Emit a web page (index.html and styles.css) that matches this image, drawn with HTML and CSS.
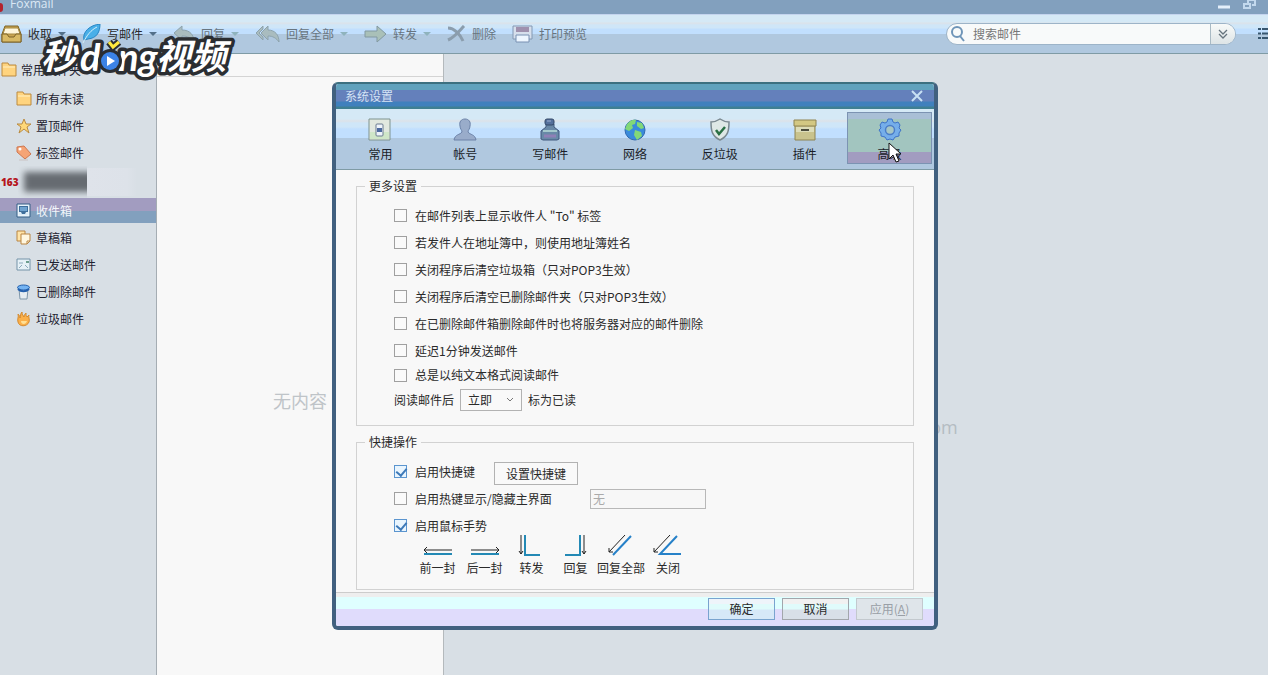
FILE: index.html
```html
<!DOCTYPE html>
<html lang="zh-CN">
<head>
    <meta charset="UTF-8">
    <meta name="viewport" content="width=device-width, initial-scale=1.0">
    <title>Foxmail</title>
    <link rel="stylesheet" href="styles.css">
</head>
<body>
    <div class="app">
        <header class="titlebar">
            <span class="app-dot"></span>
            <span class="app-name">Foxmail</span>
            <div class="window-buttons">
                <button aria-label="最小化"><svg width="14" height="14" viewBox="0 0 14 14"><path d="M1 7h12" stroke="#e4effa" stroke-width="3"/></svg></button>
                <button aria-label="还原"><svg width="14" height="14" viewBox="0 0 14 14" fill="none" stroke="#c3d9ee" stroke-width="2"><path d="M5 3V0h7v5H9M1 4h6v4H1z"/></svg></button>
            </div>
        </header>

        <nav class="toolbar">
            <button class="tool">
                <svg width="21" height="20" viewBox="0 0 21 20"><path d="M4 2h13l3 8v8H1v-8z" fill="#c9a552" stroke="#7d6226"/><path d="M4 4h13l2 6H2z" fill="#fff6da" stroke="#a5883f"/><path d="M1 10h5l2 3h5l2-3h5v8H1z" fill="#d8b964" stroke="#7d6226"/></svg>
                <span>收取</span><i class="arrow dark"></i>
            </button>
            <button class="tool">
                <svg width="19" height="20" viewBox="0 0 19 20"><path d="M2 16C0 8 8 1 18 0c0 8-3 14-12 15z" fill="#49afe8" stroke="#2786c4"/><path d="M1 19C5 11 9 6 15 3" fill="none" stroke="#d2effc"/></svg>
                <span>写邮件</span><i class="arrow dark"></i>
            </button>
            <button class="tool off">
                <svg width="22" height="18" viewBox="0 0 22 18"><path d="M9 1v4c8 0 12 5 12 12-3-4-6-6-12-6v4L1 8z" fill="#a9bcbf" stroke="#8da3ad"/></svg>
                <span>回复</span><i class="arrow"></i>
            </button>
            <button class="tool off">
                <svg width="25" height="18" viewBox="0 0 25 18"><path d="M8 1v3L4 8l4 4v3L1 8z" fill="#a9bcbf" stroke="#8da3ad"/><path d="M13 1v4c7 0 11 5 11 12-3-4-6-6-11-6v4L6 8z" fill="#a9bcbf" stroke="#8da3ad"/></svg>
                <span>回复全部</span><i class="arrow"></i>
            </button>
            <button class="tool off">
                <svg width="23" height="18" viewBox="0 0 23 18"><path d="M1 6h12V1l9 8-9 8v-5H1z" fill="#a9c0b8" stroke="#8299a2"/></svg>
                <span>转发</span><i class="arrow"></i>
            </button>
            <button class="tool off">
                <svg width="19" height="18" viewBox="0 0 19 18" fill="none" stroke="#8b9dad" stroke-width="3"><path d="M1 3c6 0 12 6 15 13"/><path d="M17 1C13 5 8 12 1 15"/></svg>
                <span>删除</span>
            </button>
            <button class="tool off">
                <svg width="21" height="18" viewBox="0 0 21 18"><path d="M1 1h19v13H1z" fill="#d6dfec" stroke="#8298b4"/><path d="M4 2h13v5H4z" fill="#9f91ae"/><path d="M4 10h13v7H4z" fill="#edf6ff" stroke="#7890b2"/></svg>
                <span>打印预览</span>
            </button>

            <div class="search">
                <svg width="16" height="16" viewBox="0 0 16 16" fill="none" stroke="#6f95b8" stroke-width="2"><circle cx="7" cy="6" r="5"/><path d="M10 10l4 5"/></svg>
                <input type="text" placeholder="搜索邮件" aria-label="搜索邮件">
                <button aria-label="更多搜索选项"><svg width="10" height="10" viewBox="0 0 10 10" fill="none" stroke="#66747e" stroke-width="1.3"><path d="M1 1l4 4 4-4M1 5l4 4 4-4"/></svg></button>
            </div>
            <button class="view-mode" aria-label="视图"><svg width="16" height="13" viewBox="0 0 16 13" fill="none" stroke="#37566f" stroke-width="2"><path d="M0 2h3M4 2h12M0 6.500h3M4 6.500h12M0 11h3M4 11h12"/></svg></button>
        </nav>

        <main class="main">
            <aside class="sidebar">
                <a class="folder root" href="#">
                    <svg width="16" height="15" viewBox="0 0 16 15"><path d="M1 1h6l1 2h7v11H1z" fill="#ffd47f" stroke="#bb8a41"/><path d="M2 5h12" stroke="#fff0c3"/></svg>
                    常用文件夹
                </a>
                <a class="folder" href="#">
                    <svg width="16" height="15" viewBox="0 0 16 15"><path d="M1 1h6l1 2h7v11H1z" fill="#ffd47f" stroke="#bb8a41"/><path d="M2 5h12" stroke="#fff0c3"/></svg>
                    所有未读
                </a>
                <a class="folder" href="#">
                    <svg width="16" height="16" viewBox="0 0 16 16"><path d="M8 1l2 5h5l-4 3 2 6-5-4-5 4 2-6-4-3h5z" fill="#ffd878" stroke="#b98b43"/></svg>
                    置顶邮件
                </a>
                <a class="folder" href="#">
                    <svg width="16" height="16" viewBox="0 0 16 16"><path d="M1 2l7-1 7 8-6 5-8-7z" fill="#f5a476" stroke="#ce7750"/><circle cx="4" cy="4" r="1.500" fill="#fff"/><path d="M3 15h9" stroke="#c9c3c4"/></svg>
                    标签邮件
                </a>
                <div class="account">
                    <b>163</b>
                    <span class="masked"></span>
                    <span class="masked-light"></span>
                </div>
                <a class="folder selected" href="#">
                    <svg width="16" height="16" viewBox="0 0 16 16"><path d="M1 1h13v13H1z" fill="#e8f3fb" stroke="#355f86"/><path d="M3 3h9v9H3z" fill="#3f6f9c"/><path d="M4 4h7v4H4z" fill="#6fa3cf"/><path d="M3 9h2l1 2h3l1-2h2v3H3z" fill="#dcebf6"/></svg>
                    收件箱
                </a>
                <a class="folder" href="#">
                    <svg width="16" height="16" viewBox="0 0 16 16"><path d="M1 1h8v10H1z" fill="#ffe4a8" stroke="#b98542"/><path d="M5 4h9v7l-3 3H5z" fill="#fff7e0" stroke="#b98542"/><path d="M14 11h-3v3" fill="none" stroke="#b98542"/></svg>
                    草稿箱
                </a>
                <a class="folder" href="#">
                    <svg width="16" height="14" viewBox="0 0 16 14"><path d="M1 1h13v11H1z" fill="#e6f1f7" stroke="#7593a8"/><path d="M10 3h3v2h-3z" fill="#6c9e8e"/><path d="M3 5h4M3 10l3-3M12 10L9 7" stroke="#8daabc"/></svg>
                    已发送邮件
                </a>
                <a class="folder" href="#">
                    <svg width="16" height="16" viewBox="0 0 16 16"><path d="M3 5h9l-1 10H4z" fill="#e6edf2" stroke="#7c95a9"/><ellipse cx="7.500" cy="3.500" rx="6" ry="2.500" fill="#73b3f2" stroke="#2460ad"/><path d="M2 5c3 3 8 3 11 0" fill="none" stroke="#2460ad" stroke-width="2"/></svg>
                    已删除邮件
                </a>
                <a class="folder" href="#">
                    <svg width="16" height="16" viewBox="0 0 16 16"><path d="M2 3c1 1 2 2 2 4 1-2 0-4 2-6 0 3 1 3 2 5 0-2 1-3 2-4 0 2 0 3 1 4l2-2c-1 2 1 4 0 7-2 5-10 5-11 0-1-3 1-5 0-8z" fill="#fbb04a" stroke="#d48a2e"/><path d="M5 10c0 4 5 4 6 0" fill="#ffe095"/></svg>
                    垃圾邮件
                </a>
            </aside>
            <section class="mail-list">
                <div class="list-head"></div>
                <p class="empty">无内容</p>
            </section>
            <section class="reader">
                <p class="site">www.foxmail.com</p>
            </section>
        </main>
    </div>

    <svg class="watermark" width="200" height="52" viewBox="0 0 200 52" role="img" aria-label="秒dǒng视频">
        <g class="brand">
            <text x="3" y="33" font-size="35">秒</text>
            <text class="latin" x="42" y="35" font-size="38">d</text>
            <text class="latin" x="80" y="35" font-size="38">ng</text>
            <text x="118" y="33" font-size="35">视频</text>
        </g>
        <circle cx="72" cy="25" r="12" fill="#2b2e32"/>
        <circle cx="72" cy="25" r="9" fill="#3c83e6"/>
        <path d="M69 20l8 5-8 5z" fill="#fff"/>
        <path d="M71 6l4 5 6-5" fill="none" stroke="#2b2e32" stroke-width="7"/>
        <path d="M71 6l4 5 6-5" fill="none" stroke="#ffe93e" stroke-width="3"/>
    </svg>

    <div class="overlay">
        <div class="dialog" role="dialog" aria-labelledby="dialogTitle">
            <div class="dialog-title">
                <h1 id="dialogTitle">系统设置</h1>
                <button aria-label="关闭窗口"><svg width="12" height="12" viewBox="0 0 12 12" stroke="#c8e0f4" stroke-width="2"><path d="M1 1l10 10M11 1L1 11"/></svg></button>
            </div>

            <div class="tabs">
                <button class="tab">
                    <svg width="24" height="24" viewBox="0 0 24 24"><path d="M1 1h21v21H1z" fill="#e1e8df" stroke="#7f938f"/><path d="M2 14h19v7H2z" fill="#cfe6c8"/><rect x="8" y="6" width="7" height="12" rx="1" fill="#eef4fb" stroke="#6a7b8f"/><path d="M9 10h5v4H9z" fill="#4c6a9f"/></svg>
                    常用
                </button>
                <button class="tab">
                    <svg width="24" height="24" viewBox="0 0 24 24"><path d="M12 1c4 0 6 3 5 7 0 3-2 4-2 6 2 3 7 2 8 8H1c1-6 6-5 8-8 0-2-2-3-2-6-1-4 1-7 5-7z" fill="#99acca" stroke="#6c82a8"/></svg>
                    帐号
                </button>
                <button class="tab">
                    <svg width="24" height="24" viewBox="0 0 24 24"><path d="M8 6h8v3l5 4v8l-2 1H5l-2-1v-8l5-4z" fill="#6989a7" stroke="#41587e"/><rect x="7" y="1" width="9" height="6" rx="2" fill="#54709c" stroke="#344968"/><path d="M5 13h14" stroke="#a5c9cd" stroke-width="2"/><path d="M6 18h12" stroke="#8f80b6" stroke-width="3"/><path d="M9 3h4" stroke="#9dadd0"/></svg>
                    写邮件
                </button>
                <button class="tab">
                    <svg width="24" height="24" viewBox="0 0 24 24"><circle cx="12" cy="12" r="10" fill="#398bdc" stroke="#3269ad"/><path d="M4 6c3-4 7-5 9-4l-1 4-3 1 1 3-4 3-4-2zM14 4l5 1 2 5-3 1-4-3zM12 12l6 2 1 4-5 4-3-5z" fill="#82d878"/></svg>
                    网络
                </button>
                <button class="tab">
                    <svg width="24" height="24" viewBox="0 0 24 24"><path d="M12 1c3 2 6 3 9 3 0 9-1 14-9 18C4 18 3 13 3 4c3 0 6-1 9-3z" fill="#dfe8e6" stroke="#7b8990" stroke-width="1.500"/><path d="M8 12l3 4 6-7" fill="none" stroke="#2b7045" stroke-width="2.500"/></svg>
                    反垃圾
                </button>
                <button class="tab">
                    <svg width="24" height="24" viewBox="0 0 24 24"><path d="M2 6h20v16H2z" fill="#c9c38d" stroke="#8e8452"/><path d="M1 2h22v6H1z" fill="#d3c883" stroke="#8e8452"/><path d="M3 9h18v5H3z" fill="#ddddb9"/><path d="M8 12h8" stroke="#4b4c3d" stroke-width="2"/></svg>
                    插件
                </button>
                <button class="tab active">
                    <svg width="24" height="24" viewBox="0 0 24 24"><path d="M10 1h4l1 3 2 1 3-1 2 3-1 3 2 2-2 3v3l-4 1-2 3-3-1-3 1-2-3-4-1v-3l-2-3 2-2-1-3 2-3 3 1 2-1z" fill="#75aeea" stroke="#3e73c8" stroke-linejoin="round"/><circle cx="12" cy="12" r="4.500" fill="#a6c6c5" stroke="#4b7dc8" stroke-width="1.500"/></svg>
                    高级
                </button>
            </div>

            <form class="settings">
                <fieldset class="more">
                    <legend>更多设置</legend>
                    <label class="check"><input type="checkbox">在邮件列表上显示收件人 "To" 标签</label>
                    <label class="check"><input type="checkbox">若发件人在地址簿中，则使用地址簿姓名</label>
                    <label class="check"><input type="checkbox">关闭程序后清空垃圾箱（只对POP3生效）</label>
                    <label class="check"><input type="checkbox">关闭程序后清空已删除邮件夹（只对POP3生效）</label>
                    <label class="check"><input type="checkbox">在已删除邮件箱删除邮件时也将服务器对应的邮件删除</label>
                    <label class="check"><input type="checkbox">延迟1分钟发送邮件</label>
                    <label class="check short"><input type="checkbox">总是以纯文本格式阅读邮件</label>
                    <div class="read-after">
                        <label for="readAfter">阅读邮件后</label>
                        <span class="select">
                            <select id="readAfter"><option>立即</option></select>
                            <svg width="8" height="6" viewBox="0 0 8 6" fill="none" stroke="#777"><path d="M1 1l3 3 3-3"/></svg>
                        </span>
                        <span>标为已读</span>
                    </div>
                </fieldset>

                <fieldset class="quick">
                    <legend>快捷操作</legend>
                    <div class="line">
                        <label class="check"><input type="checkbox" checked>启用快捷键</label>
                        <button type="button" class="plain">设置快捷键</button>
                    </div>
                    <div class="line">
                        <label class="check wide"><input type="checkbox">启用热键显示/隐藏主界面</label>
                        <input class="hotkey" type="text" value="无" aria-label="热键" disabled>
                    </div>
                    <label class="check"><input type="checkbox" checked>启用鼠标手势</label>
                    <ul class="gestures">
                        <li>
                            <svg width="30" height="24" viewBox="0 0 30 24" fill="none"><path d="M1 17h28M4 14l-3 3 3 3" stroke="#222"/><path d="M1 21h28" stroke="#2389b5" stroke-width="2"/></svg>
                            前一封
                        </li>
                        <li>
                            <svg width="30" height="24" viewBox="0 0 30 24" fill="none"><path d="M1 17h28M26 14l3 3-3 3" stroke="#222"/><path d="M1 21h28" stroke="#2389b5" stroke-width="2"/></svg>
                            后一封
                        </li>
                        <li>
                            <svg width="30" height="24" viewBox="0 0 30 24" fill="none"><path d="M4 2v19M2 18l2 3 2-3" stroke="#222"/><path d="M8 2v20h15" stroke="#2389b5" stroke-width="2"/></svg>
                            转发
                        </li>
                        <li>
                            <svg width="30" height="24" viewBox="0 0 30 24" fill="none"><path d="M23 2v19M21 18l2 3 2-3" stroke="#222"/><path d="M19 2v20H4" stroke="#2389b5" stroke-width="2"/></svg>
                            回复
                        </li>
                        <li>
                            <svg width="30" height="24" viewBox="0 0 30 24" fill="none"><path d="M19 2L3 19M3 15v4h4" stroke="#222"/><path d="M25 3L7 22" stroke="#2681c8" stroke-width="2"/></svg>
                            回复全部
                        </li>
                        <li>
                            <svg width="30" height="24" viewBox="0 0 30 24" fill="none"><path d="M17 2L1 19M1 15v4h4" stroke="#222"/><path d="M24 3L7 21h21" stroke="#2681c8" stroke-width="2"/></svg>
                            关闭
                        </li>
                    </ul>
                </fieldset>
            </form>

            <div class="dialog-buttons">
                <button class="ok">确定</button>
                <button>取消</button>
                <button disabled>应用(<u>A</u>)</button>
            </div>

            <svg class="cursor" width="14" height="22" viewBox="0 0 14 22"><path d="M1 1v16l4-4 3 7 3-1-3-7h5z" fill="#fff" stroke="#111"/></svg>
        </div>
    </div>
</body>
</html>
```

FILE: styles.css
```css
* {
    box-sizing: border-box;
}
body {
    margin: 0;
    font-family: "Noto Sans CJK SC", sans-serif;
    font-size: 12px;
    line-height: 16px;
    color: #2a2a2a;
}
button, input, select {
    font: inherit;
    color: inherit;
}
button {
    padding: 0;
    border: none;
    background: none;
}
svg {
    flex: none;
}
.app {
    display: flex;
    flex-direction: column;
    height: 100vh;
    overflow: hidden;
}

/* window title */
.titlebar {
    display: flex;
    align-items: center;
    flex: none;
    height: 14px;
    background: #82a0be;
}
.app-dot {
    width: 3px;
    height: 9px;
    margin-right: 7px;
    border-radius: 0 4px 4px 0;
    background: #b3222d;
}
.app-name {
    padding-bottom: 6px;
    font-family: "Open Sans", sans-serif;
    font-size: 12px;
    color: #dbe8f5;
}
.window-buttons {
    display: flex;
    gap: 12px;
    margin-left: auto;
    padding-right: 11px;
}
.window-buttons button {
    display: flex;
}

/* main toolbar */
.toolbar {
    display: flex;
    align-items: center;
    gap: 16px;
    flex: none;
    height: 40px;
    padding-left: 1px;
    border-bottom: 1px solid #7f9ba5;
    background: linear-gradient(#c4d4ee 1px, #d5e9f6 1px 8px, #dde2e8 9px, #cfe6f8 11px 14px, #c1dffe 15px 20px, #b0c8df 20px);
}
.tool {
    display: flex;
    align-items: center;
    gap: 6px;
    flex: none;
}
.off {
    color: #687580;
}
.arrow {
    border: 4px solid transparent;
    border-top-color: #8fb3bd;
    border-bottom: none;
}
.arrow.dark {
    border-top-color: #53708a;
}
.search {
    display: flex;
    align-items: center;
    width: 290px;
    height: 22px;
    margin-left: auto;
    padding-left: 3px;
    border: 1px solid #9db4c8;
    border-radius: 11px;
    background: #f8fafa;
    overflow: hidden;
}
.search input {
    flex: 1;
    min-width: 0;
    padding: 0 7px;
    border: none;
    outline: none;
    background: none;
}
.search input::placeholder {
    color: #777;
}
.search button {
    width: 25px;
    height: 20px;
    border-left: 1px solid #a9bac4;
    background: linear-gradient(#f8faf9, #dde4e6);
}
.view-mode {
    display: flex;
    flex: none;
    width: 10px;
    margin-left: 6px;
    overflow: hidden;
}

/* three columns */
.main {
    display: flex;
    flex: 1;
    min-height: 0;
    background: #d8dfe5;
}
.sidebar {
    flex: none;
    width: 157px;
    border-right: 1px solid #a5adb3;
}
.folder {
    display: flex;
    align-items: center;
    gap: 4px;
    height: 27px;
    padding-left: 16px;
    color: #1e2230;
    text-decoration: none;
}
.folder.root {
    height: 31px;
    padding-left: 1px;
}
.folder.selected {
    height: 25px;
    margin-bottom: 1px;
    color: #f2f6fb;
    background: linear-gradient(#a29cc0 13px, #82a0be 13px);
}
.account {
    display: flex;
    align-items: center;
    height: 32px;
}
.account b {
    width: 18px;
    padding-left: 1px;
    font-family: "Open Sans", sans-serif;
    font-size: 10px;
    font-weight: 800;
    color: #b5151d;
}
.masked {
    width: 69px;
    height: 32px;
    overflow: hidden;
}
.masked::before {
    content: "";
    display: block;
    width: 90px;
    height: 20px;
    margin: 6px 0 0 6px;
    background: #666b71;
    filter: blur(3px);
}
.masked-light {
    width: 50px;
    height: 28px;
    background: linear-gradient(90deg, #dfe3ea, #dde2e9 80%, transparent);
}
.mail-list {
    flex: none;
    width: 287px;
    border-right: 1px solid #b4b9bc;
    background: #f8f8f8;
}
.list-head {
    height: 23px;
    border-bottom: 1px solid #d4d4d4;
}
.empty {
    margin: 310px 0 0;
    font-size: 18px;
    line-height: 26px;
    text-align: center;
    color: #bfc4c8;
}
.reader {
    flex: 1;
    min-width: 0;
}
.site {
    margin: 360px 0 0;
    padding-left: 54px;
    font-family: "Open Sans", sans-serif;
    font-size: 18px;
    line-height: 26px;
    text-align: center;
    color: #b4bcc2;
}

/* video brand over the toolbar */
.watermark {
    position: absolute;
    left: 38px;
    top: 36px;
    overflow: visible;
}
.brand {
    font-family: "Noto Sans CJK SC", sans-serif;
    font-weight: 700;
    font-style: italic;
    fill: #fff;
    stroke: #2b2e32;
    stroke-width: 7px;
    stroke-linejoin: round;
    paint-order: stroke;
}
.latin {
    font-family: Lato, sans-serif;
}

/* settings dialog */
.overlay {
    position: absolute;
    inset: 0;
    display: flex;
    justify-content: center;
    align-items: flex-start;
    padding: 82px 0 0 2px;
}
.dialog {
    position: relative;
    width: 606px;
    border: 4px solid #41607f;
    border-top: 2px solid #3c7080;
    border-radius: 6px;
    background: #f8f8f8;
    overflow: hidden;
}
.dialog-title {
    display: flex;
    align-items: center;
    justify-content: space-between;
    height: 25px;
    padding: 0 11px 2px 9px;
    background: linear-gradient(#60a2bd 6px, #6480bb 6px 17px, #4080bd 18px 22px, #3f7f92 23px);
}
.dialog-title h1 {
    margin: 0;
    font-size: 12px;
    font-weight: 400;
    color: #d4e3f5;
}
.dialog-title button {
    display: flex;
}
.tabs {
    display: flex;
    height: 61px;
    padding: 3px 2px 5px;
    border-bottom: 1px solid #7f9ba5;
    background: linear-gradient(#d5e9f6 10px, #dde2e8 12px, #cfe6f8 14px 18px, #c1dffe 20px 29px, #b0c8df 29px);
}
.tab {
    display: flex;
    flex: 1;
    flex-direction: column;
    align-items: center;
    gap: 4px;
    padding-top: 5px;
    border: 1px solid transparent;
    color: #1a1e28;
}
.tab.active {
    border-color: #7c93b2;
    background: linear-gradient(#a9bfd6 6px, #a2c5bf 6px 39px, #a29cc0 39px);
}
.settings {
    padding: 8px 20px 2px;
}
fieldset {
    margin: 0;
    padding: 0 0 0 37px;
    border: 1px solid #d2d2d2;
}
legend {
    margin-left: -29px;
    padding: 0 4px;
}
.more {
    padding-top: 8px;
    padding-bottom: 14px;
}
.quick {
    margin-top: 8px;
    padding-top: 8px;
    padding-bottom: 13px;
}
.check {
    display: flex;
    align-items: center;
    gap: 8px;
    height: 27px;
}
.check.short {
    height: 22px;
}
.check.wide {
    width: 196px;
}
.check input {
    appearance: none;
    width: 13px;
    height: 13px;
    margin: 0;
    border: 1px solid #a0a0a0;
    background: #fafafa;
}
.check input:checked {
    border-color: #5b95cf;
    background: #e9f5fe;
}
.check input:checked::before {
    content: "";
    display: block;
    width: 5px;
    height: 8px;
    margin: 0 0 0 3px;
    border: solid #3d79b8;
    border-width: 0 2px 2px 0;
    transform: rotate(40deg);
}
.read-after {
    display: flex;
    align-items: center;
    gap: 6px;
    margin-top: 3px;
}
.select {
    display: grid;
    align-items: center;
}
.select > * {
    grid-area: 1 / 1;
}
.select select {
    appearance: none;
    width: 62px;
    height: 22px;
    padding: 0 7px;
    border: 1px solid #b2b2b2;
    border-radius: 0;
    background: #f9f9f9;
}
.select svg {
    justify-self: end;
    margin-right: 8px;
    pointer-events: none;
}
.line {
    display: flex;
    align-items: center;
    height: 27px;
}
.plain {
    align-self: flex-end;
    width: 84px;
    height: 23px;
    margin-left: 19px;
    border: 1px solid #b2b2b2;
    background: #f9f9f9;
}
.hotkey {
    width: 116px;
    height: 20px;
    padding: 0 2px;
    border: 1px solid #b8b8b8;
    background: #f7f7f7;
    color: #aaa;
}
.gestures {
    display: grid;
    grid-template-columns: 47px 47px 47px 41px 50px 44px;
    margin: -6px 0 0 20px;
    padding: 0;
    list-style: none;
}
.gestures li {
    display: flex;
    flex-direction: column;
    align-items: center;
    gap: 3px;
    white-space: nowrap;
}
.dialog-buttons {
    display: flex;
    justify-content: flex-end;
    gap: 7px;
    height: 34px;
    padding: 5px 11px 0 0;
    border-top: 1px solid #ccc;
    background: linear-gradient(#eee 4px, #dfffff 4px 16px, #e0dcfc 16px);
}
.dialog-buttons button {
    width: 67px;
    height: 22px;
    border: 1px solid #a2a6ac;
    background: linear-gradient(#f1f1f1 5px, #e0fbfb 5px 10px, #d8dfe8 11px);
}
.dialog-buttons .ok {
    border-color: #79a3cf;
    background: linear-gradient(#eef4fa 5px, #e0fbfb 5px 10px, #d6e8f8 11px);
}
.dialog-buttons button:disabled {
    border-color: #c3c9ce;
    background: #dfe5ea;
    color: #999fa6;
}
.cursor {
    position: absolute;
    right: 32px;
    top: 58px;
}
```
